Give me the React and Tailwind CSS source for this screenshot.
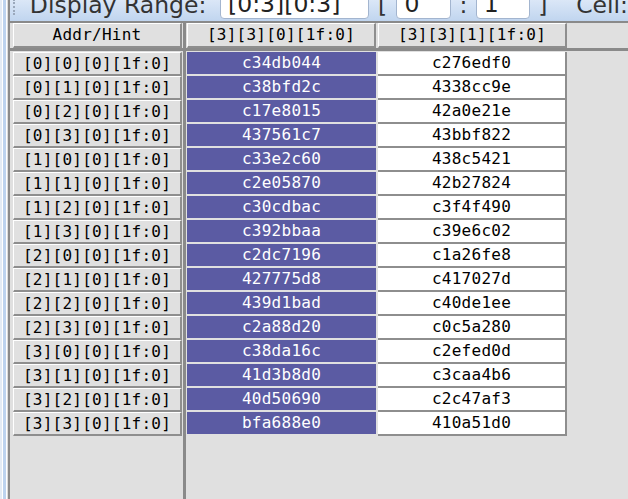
import React from "react";

const rows = [
  ["[0][0][0][1f:0]", "c34db044", "c276edf0"],
  ["[0][1][0][1f:0]", "c38bfd2c", "4338cc9e"],
  ["[0][2][0][1f:0]", "c17e8015", "42a0e21e"],
  ["[0][3][0][1f:0]", "437561c7", "43bbf822"],
  ["[1][0][0][1f:0]", "c33e2c60", "438c5421"],
  ["[1][1][0][1f:0]", "c2e05870", "42b27824"],
  ["[1][2][0][1f:0]", "c30cdbac", "c3f4f490"],
  ["[1][3][0][1f:0]", "c392bbaa", "c39e6c02"],
  ["[2][0][0][1f:0]", "c2dc7196", "c1a26fe8"],
  ["[2][1][0][1f:0]", "427775d8", "c417027d"],
  ["[2][2][0][1f:0]", "439d1bad", "c40de1ee"],
  ["[2][3][0][1f:0]", "c2a88d20", "c0c5a280"],
  ["[3][0][0][1f:0]", "c38da16c", "c2efed0d"],
  ["[3][1][0][1f:0]", "41d3b8d0", "c3caa4b6"],
  ["[3][2][0][1f:0]", "40d50690", "c2c47af3"],
  ["[3][3][0][1f:0]", "bfa688e0", "410a51d0"],
];

const mono = { fontFamily: '"DejaVu Sans Mono", monospace' };

function Box({ w, children }) {
  return (
    <div
      className={`${w} h-[26px] mb-[2px] bg-white border border-[#a3b5cf] rounded-b-[4px] flex items-end pl-[7px] text-[23.5px] leading-none text-[#222] overflow-hidden`}
    >
      <span className="mb-[2px]">{children}</span>
    </div>
  );
}

export default function App() {
  return (
    <div
      className="w-[628px] h-[499px] flex bg-[#e0e0e0] overflow-hidden"
      style={{ fontFamily: '"DejaVu Sans", sans-serif' }}
    >
      {/* left stripe */}
      <div className="flex h-full shrink-0">
        <div className="w-[2px] bg-[#e3ebf5]" />
        <div className="w-[1px] bg-white" />
        <div className="w-[3px] bg-[#bdd3ef]" />
        <div className="w-[1px] bg-white" />
        <div className="w-[1px] bg-[#dcdcdc]" />
        <div className="w-[2px] bg-[#8b8b8b]" />
      </div>

      <div className="flex-1 flex flex-col min-w-0">
        {/* toolbar */}
        <div className="h-[21px] overflow-hidden bg-gradient-to-b from-[#dbe7f7] to-[#c0d5ef] flex items-end shrink-0">
          <div className="flex items-end w-full h-[26px] text-[23.5px] leading-none text-[#333]">
            <div className="w-[20px] h-full flex items-end pl-[3px] pb-[6px]">
              <div className="w-[4px] h-[16px] border-l-2 border-dotted border-[#9aa8bb]" />
            </div>
            <div className="w-[192px] h-full flex items-end">
              <span className="mb-[4px]">Display Range:</span>
            </div>
            <Box w="w-[150px]">[0:3][0:3]</Box>
            <div className="w-[28px] h-full flex items-end justify-center">
              <span className="mb-[4px]">[</span>
            </div>
            <Box w="w-[55px]">0</Box>
            <div className="w-[25px] h-full flex items-end justify-center">
              <span className="mb-[4px]">:</span>
            </div>
            <Box w="w-[55px]">1</Box>
            <div className="w-[25px] h-full flex items-end justify-center">
              <span className="mb-[4px]">]</span>
            </div>
            <div className="ml-[21px] h-full flex items-end">
              <span className="mb-[4px]">Cell:</span>
            </div>
          </div>
        </div>
        <div className="h-[2px] bg-[#8a8a8a] shrink-0" />

        {/* main */}
        <div className="flex-1 flex min-h-0 text-[16px] tracking-[0.25px]" style={mono}>
          {/* left column */}
          <div className="w-[173px] flex flex-col shrink-0">
            <div className="h-[25px] flex">
              <div className="ml-[3px] w-[169px] h-full border-t border-l border-white border-b-2 border-r-2 border-b-[#8e8e8e] border-r-[#8e8e8e] flex items-center justify-center text-black">
                Addr/Hint
              </div>
            </div>
            <div className="h-[3px] bg-[#8a8a8a]" />
            <div className="pt-[1px] flex flex-col">
              {rows.map((r) => (
                <div key={r[0]} className="h-[24px] flex">
                  <div className="ml-[3px] w-[169px] h-full border-t border-l border-white border-b-2 border-r-2 border-b-[#8e8e8e] border-r-[#8e8e8e] flex items-center justify-center text-black">
                    {r[0]}
                  </div>
                </div>
              ))}
            </div>
          </div>

          {/* vertical separator */}
          <div className="w-[3px] bg-[#8a8a8a] shrink-0" />

          {/* right column */}
          <div className="flex-1 flex flex-col min-w-0">
            <div className="h-[25px] flex">
              <div className="ml-[1px] w-[189px] h-full border-t border-l border-white border-b-2 border-r-2 border-b-[#8e8e8e] border-r-[#8e8e8e] flex items-center justify-center text-black">
                [3][3][0][1f:0]
              </div>
              <div className="ml-[2px] w-[189px] h-full border-t border-l border-white border-b-2 border-r-2 border-b-[#8e8e8e] border-r-[#8e8e8e] flex items-center justify-center text-black">
                [3][3][1][1f:0]
              </div>
            </div>
            <div className="h-[3px] bg-[#8a8a8a]" />
            <div className="pt-[1px] flex flex-col">
              {rows.map((r) => (
                <div key={r[0]} className="h-[24px] flex">
                  <div className="ml-[1px] w-[189px] h-[22px] bg-[#5b5ba3] text-white flex items-center justify-center">
                    {r[1]}
                  </div>
                  <div className="ml-[2px] w-[189px] h-full bg-white border-b-2 border-r-2 border-[#8e8e8e] flex items-center justify-center text-black">
                    {r[2]}
                  </div>
                </div>
              ))}
            </div>
          </div>
        </div>
      </div>
    </div>
  );
}
